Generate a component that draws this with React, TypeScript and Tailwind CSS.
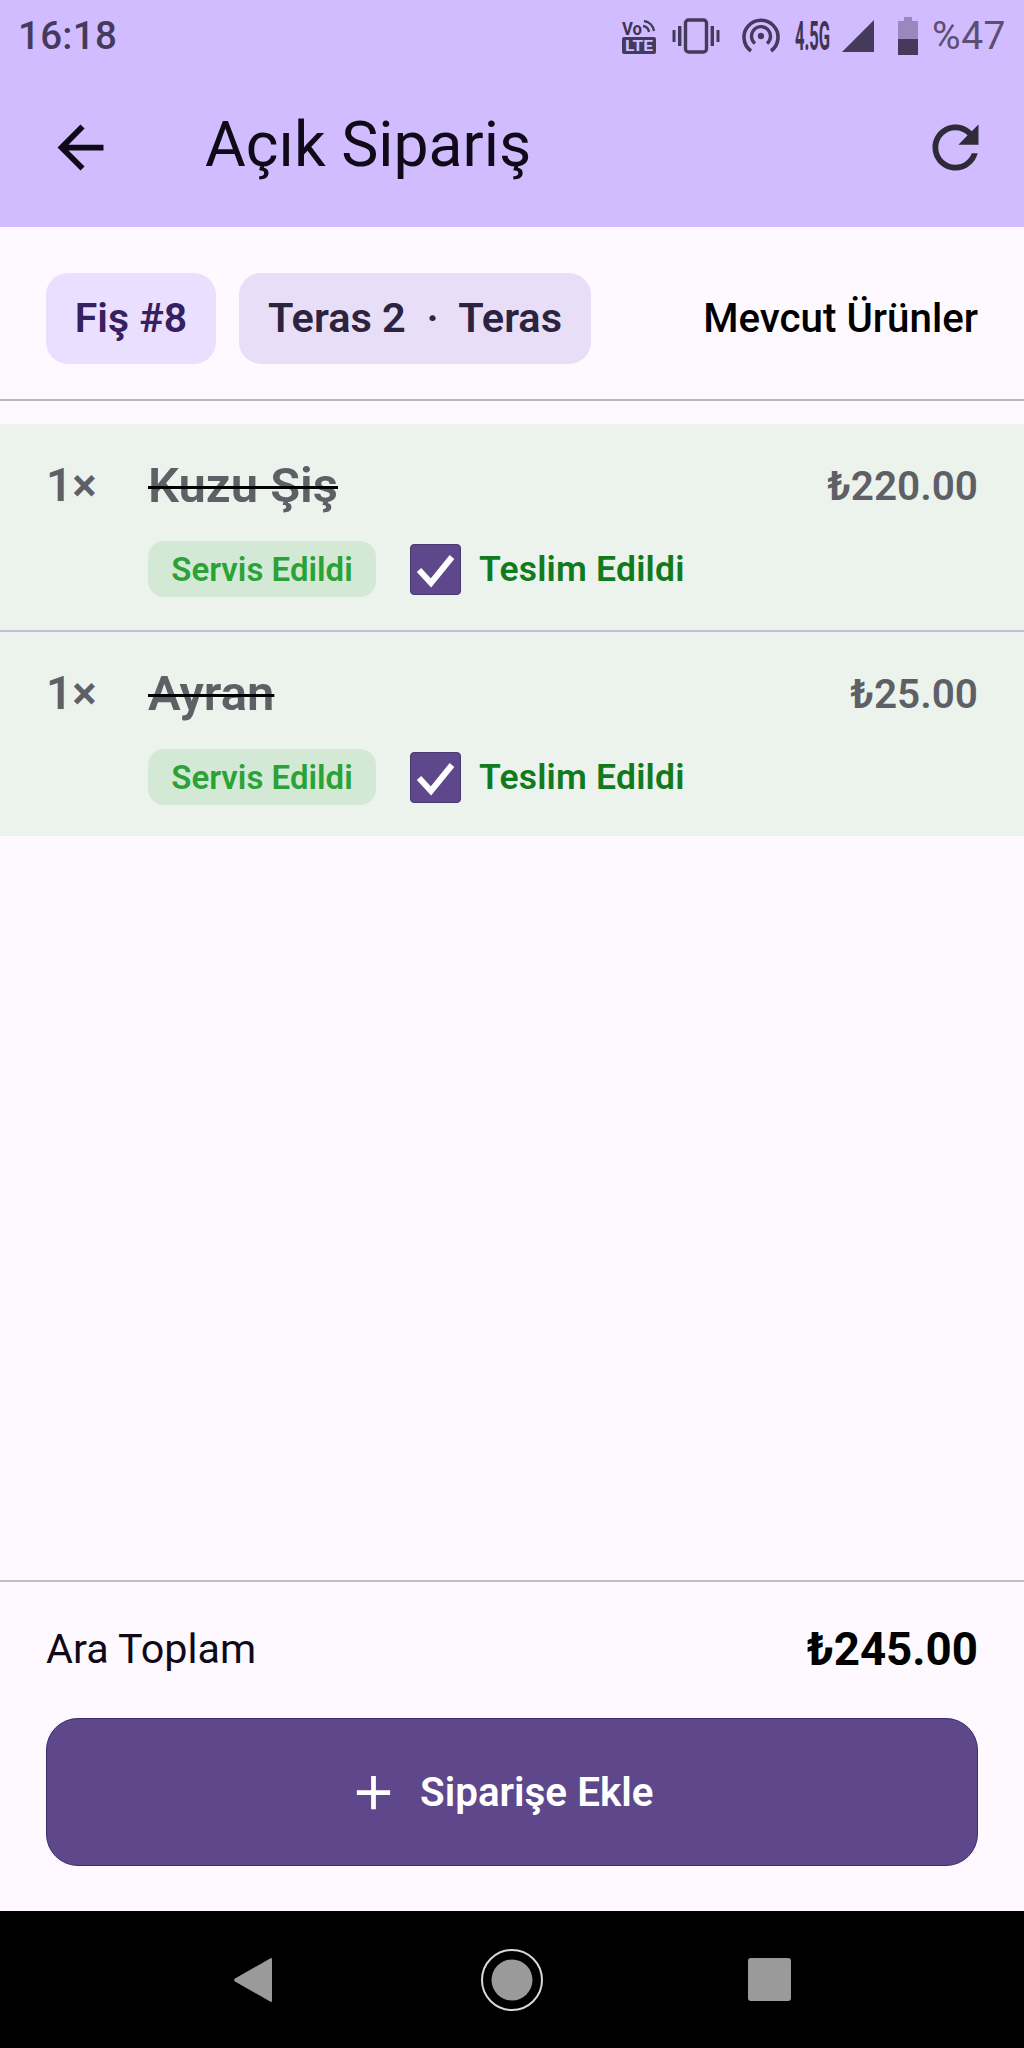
const font = { fontFamily: "Roboto, 'Noto Sans', sans-serif" };

function CondText({ x, y, w, size, weight, children, fill = "#3f3352" }: any) {
  return (
    <text x={x} y={y} fontSize={size} fontWeight={weight} fill={fill} textLength={w} lengthAdjust="spacingAndGlyphs" fontFamily="Roboto, sans-serif">
      {children}
    </text>
  );
}

function StatusIcons() {
  const c = "#463a5c";
  return (
    <div className="flex items-center">
      <svg width="36" height="40" viewBox="0 -2 36 40" className="mr-[15px]">
        <CondText x={1} y={17} w={20} size={18} weight={700}>Vo</CondText>
        <path d="M22 8a7 7 0 0 1 6 6M23 3a12 12 0 0 1 10 10" fill="none" stroke={c} strokeWidth="2.4" />
        <rect x="1" y="19" width="34" height="17" rx="2" fill={c} />
        <CondText x={4} y={33} w={28} size={15} weight={700} fill="#d0bcff">LTE</CondText>
      </svg>
      <svg width="48" height="36" viewBox="0 0 48 36" className="mr-[22px]">
        <rect x="13.5" y="2" width="21" height="32" rx="3" fill="none" stroke={c} strokeWidth="3.4" />
        <rect x="0.5" y="12" width="3" height="12" fill={c} />
        <rect x="6" y="8" width="3.4" height="20" fill={c} />
        <rect x="38.6" y="8" width="3.4" height="20" fill={c} />
        <rect x="44.5" y="12" width="3" height="12" fill={c} />
      </svg>
      <svg width="38" height="36" viewBox="0 0 38 36" className="mr-[15px]">
        <path d="M9 33A17 17 0 1 1 29 33" fill="none" stroke={c} strokeWidth="3.6" />
        <path d="M13 25.500A9.500 9.500 0 1 1 25 25.500" fill="none" stroke={c} strokeWidth="3.4" />
        <circle cx="19" cy="18" r="3.200" fill={c} />
      </svg>
      <svg width="36" height="40" viewBox="0 -4 36 40" className="mr-[10px] overflow-visible">
        <text transform="scale(1 2.4)" x={0} y={12.600} fontSize={17} fontWeight={700} textLength={35} lengthAdjust="spacingAndGlyphs" fill="#3f3352" fontFamily="Roboto, sans-serif">4.5G</text>
      </svg>
      <svg width="34" height="34" viewBox="0 0 34 34" className="mr-[22px]">
        <path d="M33 1V33H1Z" fill={c} />
      </svg>
      <svg width="22" height="38" viewBox="0 0 22 38" className="mr-[13px]">
        <path d="M7 0h8v4h6v18H1V4h6Z" fill="#9a87bd" />
        <rect x="1" y="22" width="20" height="16" fill={c} />
      </svg>
      <span className="text-[39px] leading-none tracking-[0.5px] text-[#5b4f72]" style={font}>%47</span>
    </div>
  );
}

function OrderRow({ name, price, divider }: { name: string; price: string; divider?: boolean }) {
  return (
    <div className={`${divider ? "h-[208px] border-b-[2px] border-[#c6c0d2]" : "h-[204px]"} bg-[#ecf3ec] px-[46px] pt-[26px]`}>
      <div className="flex items-center justify-between h-[72px]">
        <div className="-mt-[2px] flex items-center">
          <span className="w-[102px] text-[46px] font-semibold leading-none text-[#5f6066]">1×</span>
          <span className="text-[49px] font-semibold leading-none text-[#5f6066] line-through decoration-black decoration-[3px]">{name}</span>
        </div>
        <span className="text-[40.5px] font-semibold leading-none text-[#5f6066]">{price}</span>
      </div>
      <div className="flex items-center ml-[102px] mt-[19px]">
        <div className="flex h-[56px] w-[228px] items-center justify-center rounded-[16px] bg-[#d3e9d6] pt-[1px] text-[33px] font-semibold text-[#2aa236]">
          Servis Edildi
        </div>
        <div className="ml-[34px] flex h-[51px] w-[51px] items-center justify-center rounded-[4px] border border-[#463a70] bg-[#5f478c]">
          <svg width="43" height="43" viewBox="0 0 43 43">
            <path d="M5 22 L17 35 L38 9" fill="none" stroke="#ffffff" strokeWidth="6" />
          </svg>
        </div>
        <span className="ml-[18px] pt-[2px] text-[35.500px] font-semibold tracking-[0.2px] text-[#127a1e]">Teslim Edildi</span>
      </div>
    </div>
  );
}

export default function App() {
  return (
    <div className="flex h-[2048px] w-[1024px] flex-col overflow-hidden bg-[#fef9ff]" style={font}>
      <header className="h-[227px] shrink-0 bg-[#d0bcff]">
        <div className="flex h-[80px] items-center justify-between pb-[8px] pl-[18px] pr-[18px]">
          <span className="text-[38.500px] font-medium leading-none tracking-[0.3px] text-[#463a5c]">16:18</span>
          <StatusIcons />
        </div>
        <div className="flex h-[130px] items-center pl-[46px] pr-[34px] pt-[5px]">
          <svg width="69" height="69" viewBox="0 0 24 24">
            <path d="M20 11H7.830l5.590-5.590L12 4l-8 8 8 8 1.410-1.410L7.830 13H20v-2z" fill="#0f0a18" />
          </svg>
          <h1 className="ml-[90px] -mt-[4px] text-[62.500px] leading-none text-[#100a18]">Açık Sipariş</h1>
          <svg width="69" height="69" viewBox="0 0 24 24" className="ml-auto">
            <path d="M17.650 6.350C16.200 4.900 14.210 4 12 4c-4.420 0-7.990 3.580-7.990 8s3.570 8 7.990 8c3.730 0 6.840-2.550 7.730-6h-2.080c-.82 2.330-3.040 4-5.650 4-3.310 0-6-2.690-6-6s2.690-6 6-6c1.660 0 3.140.69 4.220 1.780L13 11h7V4l-2.350 2.350z" fill="#2f2a38" />
          </svg>
        </div>
      </header>

      <section className="flex h-[174px] shrink-0 items-center border-b-[2px] border-[#b9b4c0] px-[46px] pt-[10px]">
        <div className="flex h-[91px] w-[170px] items-center justify-center rounded-[22px] bg-[#eadfff] pt-[1px] text-[41px] font-semibold text-[#36205f]">
          Fiş #8
        </div>
        <div className="ml-[23px] flex h-[91px] w-[352px] items-center justify-center rounded-[22px] bg-[#e8def8] pt-[1px] text-[41.500px] font-semibold text-[#2c2340] whitespace-pre">
          Teras 2  ·  Teras
        </div>
        <span className="ml-auto pt-[2px] text-[40.300px] font-medium text-black">Mevcut Ürünler</span>
      </section>

      <main className="flex-1 pt-[23px]">
        <OrderRow name="Kuzu Şiş" price="₺220.00" divider />
        <OrderRow name="Ayran" price="₺25.00" />
      </main>

      <footer className="h-[331px] shrink-0 border-t-[2px] border-[#c4bec8] px-[46px]">
        <div className="flex h-[136px] items-center justify-between">
          <span className="text-[41.300px] text-[#100a18]">Ara Toplam</span>
          <span className="text-[45.700px] font-bold text-black">₺245.00</span>
        </div>
        <button className="flex h-[148px] w-full items-center justify-center rounded-[32px] border-[1.5px] border-[#3b2a6c] bg-[#5f478c] pr-[20px] text-white">
          <svg width="57" height="57" viewBox="0 0 24 24" className="-ml-[6px]">
            <path d="M19 13h-6v6h-2v-6H5v-2h6V5h2v6h6v2z" fill="#ffffff" />
          </svg>
          <span className="ml-[18.500px] pt-[2px] text-[40.400px] font-semibold">Siparişe Ekle</span>
        </button>
      </footer>

      <nav className="flex h-[137px] shrink-0 items-center justify-center bg-black">
        <svg width="40" height="46" viewBox="0 0 40 46" className="mr-[208px]">
          <path d="M38 1a1 1 0 0 1 1 1V44a1 1 0 0 1-1 1L2 24.500a2 2 0 0 1 0-3Z" fill="#9a9a9a" />
        </svg>
        <svg width="62" height="62" viewBox="0 0 62 62">
          <circle cx="31" cy="31" r="30" fill="none" stroke="#d8d8d8" strokeWidth="2" />
          <circle cx="31" cy="31" r="20.500" fill="#9a9a9a" />
        </svg>
        <div className="ml-[205px] h-[43px] w-[43px] rounded-[3px] bg-[#9a9a9a]" />
      </nav>
    </div>
  );
}
